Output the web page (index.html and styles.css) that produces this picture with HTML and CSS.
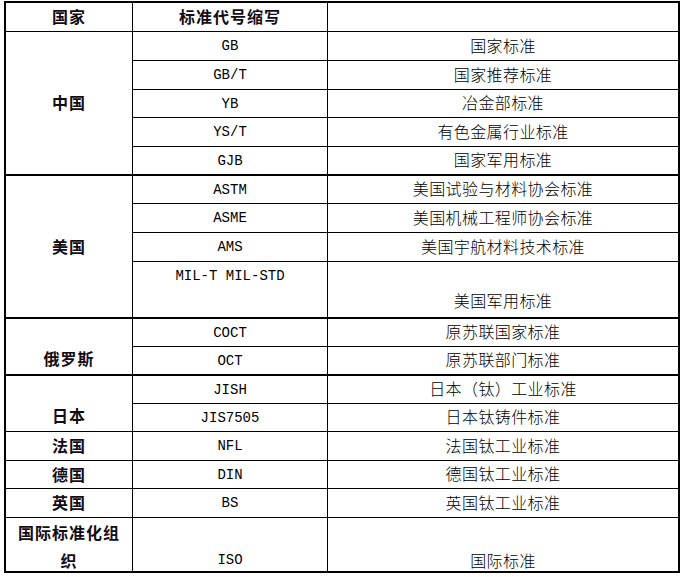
FILE: index.html
```html
<!DOCTYPE html>
<html lang="zh">
<head>
<meta charset="utf-8">
<title>标准代号缩写</title>
<link rel="stylesheet" href="styles.css">
</head>
<body>
<div class="std">
  <div class="cell country r-head">国家</div>
  <div class="cell head r-head">标准代号缩写</div>
  <div class="cell desc r-head"></div>

  <div class="cell country thick span5">中国</div>
  <div class="cell code">GB</div>
  <div class="cell desc">国家标准</div>
  <div class="cell code">GB/T</div>
  <div class="cell desc">国家推荐标准</div>
  <div class="cell code">YB</div>
  <div class="cell desc">冶金部标准</div>
  <div class="cell code">YS/T</div>
  <div class="cell desc">有色金属行业标准</div>
  <div class="cell code thick">GJB</div>
  <div class="cell desc thick">国家军用标准</div>

  <div class="cell country thick span4">美国</div>
  <div class="cell code">ASTM</div>
  <div class="cell desc">美国试验与材料协会标准</div>
  <div class="cell code">ASME</div>
  <div class="cell desc">美国机械工程师协会标准</div>
  <div class="cell code">AMS</div>
  <div class="cell desc">美国宇航材料技术标准</div>
  <div class="cell code top thick">MIL-T MIL-STD</div>
  <div class="cell desc bottom thick">美国军用标准</div>

  <div class="cell country bottom thick span2">俄罗斯</div>
  <div class="cell code">COCT</div>
  <div class="cell desc">原苏联国家标准</div>
  <div class="cell code thick">OCT</div>
  <div class="cell desc thick">原苏联部门标准</div>

  <div class="cell country bottom span2">日本</div>
  <div class="cell code">JISH</div>
  <div class="cell desc">日本（钛）工业标准</div>
  <div class="cell code">JIS7505</div>
  <div class="cell desc">日本钛铸件标准</div>

  <div class="cell country">法国</div>
  <div class="cell code">NFL</div>
  <div class="cell desc">法国钛工业标准</div>

  <div class="cell country">德国</div>
  <div class="cell code">DIN</div>
  <div class="cell desc">德国钛工业标准</div>

  <div class="cell country">英国</div>
  <div class="cell code">BS</div>
  <div class="cell desc">英国钛工业标准</div>

  <div class="cell country wrap last">国际标准化组织</div>
  <div class="cell code second last">ISO</div>
  <div class="cell desc second last">国际标准</div>
</div>
</body>
</html>
```

FILE: styles.css
```css
html, body {
  margin: 0;
  padding: 0;
  background: #ffffff;
}

body {
  padding: 1px 0 0 4px;
}

.std {
  display: grid;
  width: 672px;
  grid-template-columns: 127px 195px 350px;
  grid-template-rows:
    29px 29px 29px 28px 29px 29px
    28px 29px 29px 57px
    28px 29px
    28px 28px
    29px 28px 29px
    53px;
  border: 2px solid #000;
}

.cell {
  box-sizing: border-box;
  display: flex;
  align-items: center;
  justify-content: center;
  padding: 0 5px;
  border-bottom: 1px solid #000;
  border-right: 1px solid #000;
  color: #000;
  line-height: 28px;
  white-space: nowrap;
  text-align: center;
}

.desc {
  border-right: none;
  font-family: "Noto Sans CJK SC", "Noto Sans", sans-serif;
  font-size: 16px;
  font-weight: 300;
  letter-spacing: 0.4px;
  padding-bottom: 3px;
}

.country,
.head {
  font-family: "Noto Sans CJK SC", "Noto Sans", sans-serif;
  font-size: 16px;
  font-weight: 700;
  letter-spacing: 1px;
  color: #140c14;
  padding-bottom: 2px;
}

.code {
  font-family: "Liberation Mono", "DejaVu Sans Mono", monospace;
  font-size: 14px;
}

.span5 { grid-row: span 5; }
.span4 { grid-row: span 4; }
.span2 { grid-row: span 2; }

.top { align-items: flex-start; }
.bottom { align-items: flex-end; }
.thick { border-bottom-width: 2px; }

.wrap {
  white-space: normal;
  align-items: flex-start;
}

.second {
  align-items: flex-start;
  padding-top: 28px;
}

.last { border-bottom: none; }
```
